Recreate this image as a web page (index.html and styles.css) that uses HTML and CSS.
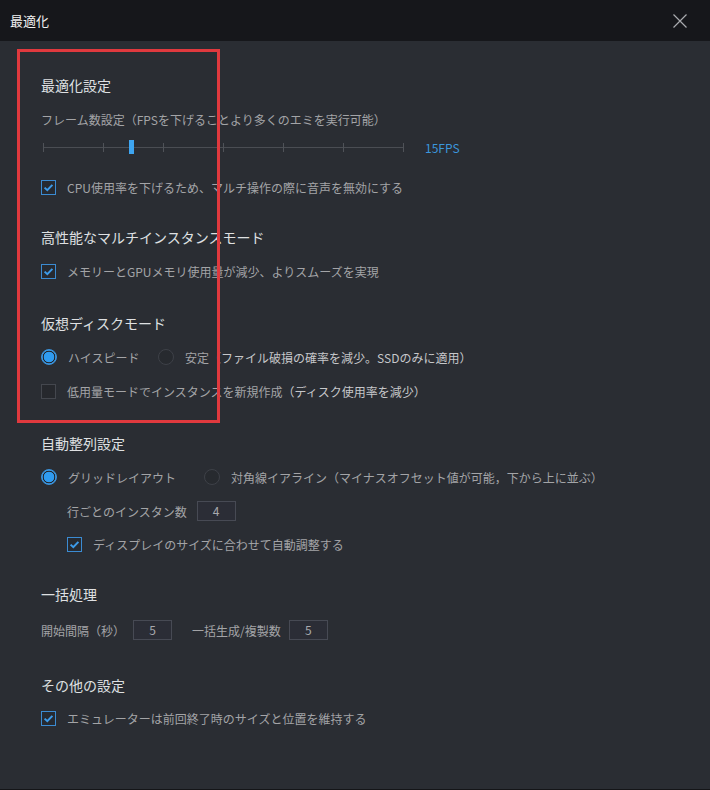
FILE: index.html
```html
<!DOCTYPE html>
<html lang="ja">

<head>
    <meta charset="UTF-8">
    <meta name="viewport" content="width=device-width, initial-scale=1.0">
    <title>最適化</title>
    <link rel="stylesheet" href="styles.css">
</head>

<body>
    <div class="window">
        <div class="titlebar">
            <span class="title">最適化</span>
            <svg class="close" width="16" height="16" viewBox="0 0 16 16">
                <path d="M1.5 1.5 L14.5 14.5 M14.5 1.5 L1.5 14.5" stroke="#a9abaf" stroke-width="1.2" fill="none" />
            </svg>
        </div>

        <div class="content">
            <!-- 最適化設定 -->
            <div class="section first">
                <div class="section-title">最適化設定</div>
                <div class="row label-row">フレーム数設定（FPSを下げることより多くのエミを実行可能）</div>
                <div class="slider">
                    <div class="track">
                        <span class="tick"></span><span class="tick"></span><span class="tick"></span>
                        <span class="tick"></span><span class="tick"></span><span class="tick"></span>
                        <span class="tick"></span>
                        <span class="thumb"></span>
                    </div>
                    <span class="fps">15FPS</span>
                </div>
                <div class="row check-row slider-after">
                    <span class="checkbox checked">
                        <svg width="15" height="15" viewBox="0 0 15 15"><path d="M3.6 7.6 L6.3 10.2 L11.4 4.9" stroke="#3d9be9" stroke-width="2" fill="none" /></svg>
                    </span>
                    <span>CPU使用率を下げるため、マルチ操作の際に音声を無効にする</span>
                </div>
            </div>

            <!-- 高性能なマルチインスタンスモード -->
            <div class="section">
                <div class="section-title">高性能なマルチインスタンスモード</div>
                <div class="row check-row">
                    <span class="checkbox checked">
                        <svg width="15" height="15" viewBox="0 0 15 15"><path d="M3.6 7.6 L6.3 10.2 L11.4 4.9" stroke="#3d9be9" stroke-width="2" fill="none" /></svg>
                    </span>
                    <span>メモリーとGPUメモリ使用量が減少、よりスムーズを実現</span>
                </div>
            </div>

            <!-- 仮想ディスクモード -->
            <div class="section wide">
                <div class="section-title">仮想ディスクモード</div>
                <div class="row">
                    <span class="option opt-disk">
                        <span class="radio on"></span>
                        <span>ハイスピード</span>
                    </span>
                    <span class="option">
                        <span class="radio"></span>
                        <span>安定<span class="note">（ファイル破損の確率を減少。SSDのみに適用）</span></span>
                    </span>
                </div>
                <div class="row check-row">
                    <span class="checkbox"></span>
                    <span>低用量モードでインスタンスを新規作成<span class="note">（ディスク使用率を減少）</span></span>
                </div>
            </div>

            <!-- 自動整列設定 -->
            <div class="section wide">
                <div class="section-title">自動整列設定</div>
                <div class="row">
                    <span class="option opt-grid">
                        <span class="radio on"></span>
                        <span>グリッドレイアウト</span>
                    </span>
                    <span class="option">
                        <span class="radio"></span>
                        <span>対角線イアライン（マイナスオフセット値が可能，下から上に並ぶ）</span>
                    </span>
                </div>
                <div class="row indent">
                    <span>行ごとのインスタン数</span>
                    <span class="num-box gap-l">4</span>
                </div>
                <div class="row check-row indent tight">
                    <span class="checkbox checked">
                        <svg width="15" height="15" viewBox="0 0 15 15"><path d="M3.6 7.6 L6.3 10.2 L11.4 4.9" stroke="#3d9be9" stroke-width="2" fill="none" /></svg>
                    </span>
                    <span>ディスプレイのサイズに合わせて自動調整する</span>
                </div>
            </div>

            <!-- 一括処理 -->
            <div class="section">
                <div class="section-title">一括処理</div>
                <div class="row batch-row">
                    <span>開始間隔（秒）</span>
                    <span class="num-box gap-s">5</span>
                    <span class="batch-label">一括生成/複製数</span>
                    <span class="num-box gap-s">5</span>
                </div>
            </div>

            <!-- その他の設定 -->
            <div class="section last">
                <div class="section-title">その他の設定</div>
                <div class="row check-row tight">
                    <span class="checkbox checked">
                        <svg width="15" height="15" viewBox="0 0 15 15"><path d="M3.6 7.6 L6.3 10.2 L11.4 4.9" stroke="#3d9be9" stroke-width="2" fill="none" /></svg>
                    </span>
                    <span>エミュレーターは前回終了時のサイズと位置を維持する</span>
                </div>
            </div>
        </div>

        <!-- highlight box -->
        <div class="highlight"></div>
    </div>
</body>

</html>
```

FILE: styles.css
```css
body {
    margin: 0;
    background-color: #2a2d33;
    font-family: "Noto Sans CJK JP", "Noto Sans", sans-serif;
}

.window {
    position: relative;
    width: 710px;
    height: 790px;
    box-sizing: border-box;
    background-color: #2a2d33;
    border-bottom: 1px solid #141518;
    overflow: hidden;
}

.titlebar {
    height: 41px;
    padding: 0 22px 0 10px;
    display: flex;
    align-items: center;
    justify-content: space-between;
    background-color: #16171b;
}

.title {
    font-size: 13px;
    color: #f2f2f2;
}

.close {
    display: block;
    margin-top: 0;
}

.content {
    padding: 34px 0 0 41px;
    font-size: 12px;
    color: #a3a4a7;
}

.section {
    margin-top: 30px;
}

.section.first {
    margin-top: 0;
}

.section.wide {
    margin-top: 32px;
}

.section.last {
    margin-top: 35px;
}

.section-title {
    height: 20px;
    line-height: 20px;
    font-size: 14px;
    color: #dfe0e2;
}

.row {
    height: 20px;
    margin-top: 14px;
    display: flex;
    align-items: center;
    white-space: nowrap;
}

.row.tight {
    margin-top: 13px;
}

.row.batch-row {
    margin-top: 16px;
}

.label-row {
    margin-top: 14px;
}

.indent {
    padding-left: 26px;
}

/* slider */
.slider {
    margin-top: 10px;
    height: 16px;
    display: flex;
    align-items: center;
}

.track {
    position: relative;
    margin-left: 2px;
    width: 361px;
    height: 16px;
    display: flex;
    align-items: center;
    justify-content: space-between;
    background: linear-gradient(#4a4d53, #4a4d53) no-repeat 0 8px / 100% 1px;
}

.tick {
    width: 1px;
    height: 9px;
    background-color: #4f5258;
}

.thumb {
    position: absolute;
    left: 86px;
    top: 1px;
    width: 5px;
    height: 14px;
    background-color: #3ea5f1;
}

.fps {
    margin-left: 21px;
    font-size: 12px;
    color: #3b96dc;
}

.slider-after {
    margin-top: 22px;
}

/* checkbox */
.checkbox {
    width: 15px;
    height: 15px;
    box-sizing: border-box;
    border: 1px solid #44474e;
    background-color: #26282d;
    margin-right: 11px;
    flex-shrink: 0;
    position: relative;
}

.checkbox.checked {
    border-color: #3b8bd2;
    background-color: #262a31;
}

.checkbox svg {
    position: absolute;
    left: -1px;
    top: -1px;
}

/* radio */
.option {
    display: flex;
    align-items: center;
}

.opt-disk {
    width: 117px;
}

.opt-grid {
    width: 163px;
}

.radio {
    width: 16px;
    height: 16px;
    box-sizing: border-box;
    border-radius: 50%;
    border: 1px solid #3e4148;
    background-color: #272a2f;
    margin-right: 11px;
    flex-shrink: 0;
}

.radio.on {
    border: 1px solid #3a93dc;
    background: radial-gradient(circle, #2f9bf0 0, #2f9bf0 5px, #22252b 5.6px, #22252b 6px, #3a93dc 6.6px);
}

.note {
    color: #c6c7ca;
}

/* number boxes */
.num-box {
    width: 39px;
    height: 20px;
    box-sizing: border-box;
    border: 1px solid #474a54;
    background-color: #2b2d36;
    text-align: center;
    line-height: 18px;
    color: #a8a9ad;
}

.gap-l {
    margin-left: 10px;
}

.gap-s {
    margin-left: 8px;
}

.batch-label {
    margin-left: 20px;
}

/* red highlight overlay */
.highlight {
    position: absolute;
    left: 17px;
    top: 49px;
    width: 203px;
    height: 374px;
    box-sizing: border-box;
    border: 3px solid #e0393e;
    pointer-events: none;
}
```
